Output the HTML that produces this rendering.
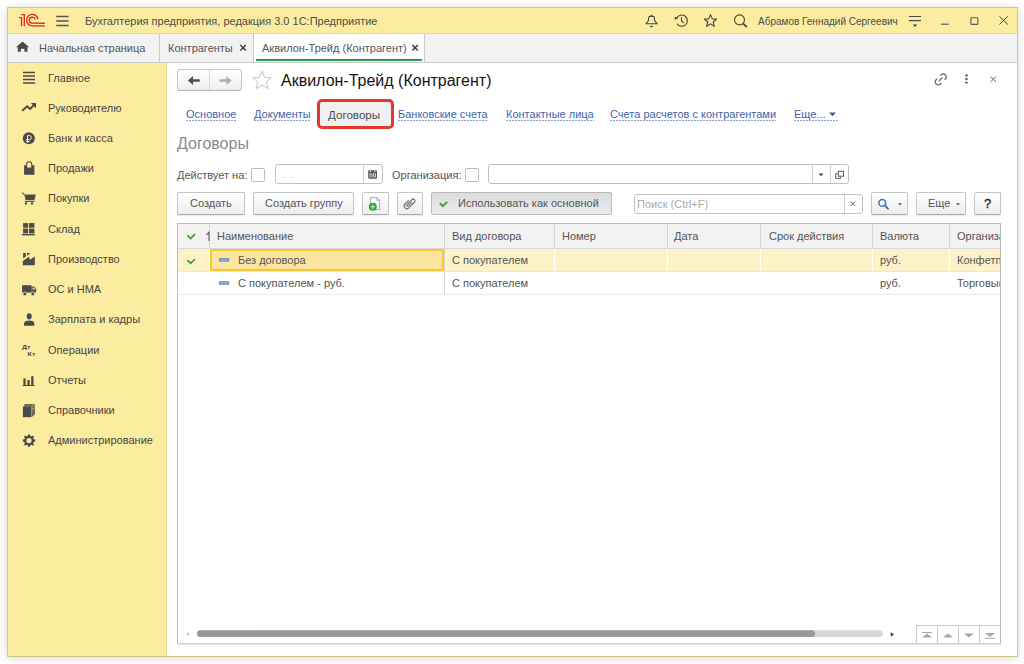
<!DOCTYPE html>
<html><head><meta charset="utf-8">
<style>
*{box-sizing:border-box;margin:0;padding:0}
html,body{width:1024px;height:664px;overflow:hidden;background:#fff;font-family:"Liberation Sans",sans-serif;font-size:11px;color:#555}
.a{position:absolute}
.t{position:absolute;white-space:nowrap;line-height:11px}
svg{position:absolute;overflow:visible;z-index:2}
#win{position:absolute;left:7px;top:7px;width:1011px;height:650px;border:1px solid #d3c68a;background:#fff;box-shadow:0 1px 9px rgba(0,0,0,0.16)}
#title{left:8px;top:8px;width:1009px;height:26px;background:#fbeca0;border-bottom:1px solid #e9d88a}
#tabs{left:8px;top:34px;width:1009px;height:29px;background:#f2f2f2;border-bottom:1px solid #c9c9c9}
#side{left:8px;top:63px;width:159px;height:593px;background:#fbeca0;border-right:1px solid #ecdc94}
.sep{position:absolute;top:34px;width:1px;height:28px;background:#cacaca}
.link{display:inline-block;height:12px;color:#3f62a8;background:repeating-linear-gradient(90deg,#8aa0cf 0 2px,transparent 2px 3px) left bottom/100% 1px no-repeat}
.btn{position:absolute;height:23px;border:1px solid #c4c4c4;border-bottom-color:#a9a9a9;border-radius:2px;background:linear-gradient(#fff,#ededed);box-shadow:0 1px 1px rgba(0,0,0,0.08)}
.fld{position:absolute;border:1px solid #bfbfbf;border-radius:3px;background:#fff}
.chk{position:absolute;width:14px;height:14px;border:1px solid #bdbdbd;border-radius:2px;background:#fff}
.ic{fill:#4a4a4a}
</style></head><body>
<div id="win"></div>
<div id="title" class="a"></div>
<div id="tabs" class="a"></div>
<div id="side" class="a"></div>

<!-- ===== title bar ===== -->
<svg style="left:0;top:0" width="1024" height="34" viewBox="0 0 1024 34">
  <g fill="none" stroke="#dc2a20" stroke-width="1.35">
    <path d="M19 17.6H21.5V26.2M21.2 14.6H24.3V26.2"/>
    <path d="M37.9 19.3A5.7 5.7 0 1 0 32.3 25.8H44.8"/>
    <path d="M35.2 19.4A3 3 0 1 0 32.3 23.2H44.8"/>
  </g>
  <g stroke="#555" stroke-width="1.3"><path d="M56.3 16.5H68.6M56.3 21H68.6M56.3 25.5H68.6"/></g>
  <!-- bell -->
  <path d="M646 23.8H657.1L654.4 20.2V17.8Q654.3 16.4 653 16.4H650Q648.7 16.4 648.6 17.8V20.2Z" fill="none" stroke="#444" stroke-width="1.1" stroke-linejoin="round"/>
  <path d="M650.4 16.2L651.5 14.2L652.6 16.2Z" fill="#444"/>
  <ellipse cx="651.5" cy="26.4" rx="1.7" ry="0.75" fill="#444"/>
  <!-- history -->
  <g fill="none" stroke="#444" stroke-width="1.1">
    <path d="M676.8 18A5.6 5.6 0 1 1 677 23.7"/>
    <path d="M681.5 17.2V20.8L683.7 23"/>
  </g>
  <path d="M674.4 19.6L675.2 16.4L678.2 18.8Z" fill="#444"/>
  <!-- star -->
  <path d="M710.5 14.6L712.3 18.9L716.6 19.1L713.3 22L714.4 26.3L710.5 23.9L706.6 26.3L707.7 22L704.4 19.1L708.7 18.9Z" fill="none" stroke="#444" stroke-width="1.1" stroke-linejoin="round"/>
  <!-- search -->
  <circle cx="739.5" cy="19.9" r="5" fill="none" stroke="#444" stroke-width="1.1"/>
  <path d="M743.2 23.6L746.8 27.2" stroke="#444" stroke-width="1.8"/>
  <!-- filter -->
  <path d="M909 16.4H921M909 20.6H921" stroke="#4a4a4a" stroke-width="1.05"/>
  <path d="M913 24.6H917.2L915.1 26.9Z" fill="#333"/>
  <path d="M941 24.2H948.8" stroke="#6a6a6a" stroke-width="1.3"/>
  <rect x="970.9" y="17.7" width="7" height="6.6" rx="0.8" fill="none" stroke="#5a5a5a" stroke-width="1.15"/>
  <path d="M999.4 16.3L1007.8 24.5M1007.8 16.3L999.4 24.5" stroke="#444" stroke-width="1"/>
</svg>
<div class="t" style="left:85px;top:16px;color:#4d4d4d">Бухгалтерия предприятия, редакция 3.0 1С:Предприятие</div>
<div class="t" style="left:758px;top:16px;font-size:10px;color:#4d4d4d">Абрамов Геннадий Сергеевич</div>

<!-- ===== tabs ===== -->
<div class="sep" style="left:159px"></div>
<div class="sep" style="left:253px"></div>
<div class="a" style="left:254px;top:34px;width:170px;height:28px;background:#fff"></div>
<div class="sep" style="left:424px"></div>
<div class="a" style="left:256px;top:59px;width:166px;height:2px;background:#22a048"></div>
<svg style="left:0;top:0" width="430" height="62" viewBox="0 0 430 62">
  <path d="M22.6 41.6L29.2 47.3H27.4V51.8H24.4V48.8H20.8V51.8H17.8V47.3H16Z" fill="#4a4a4a"/>
  <path d="M240.4 45L245.8 50.4M245.8 45L240.4 50.4" stroke="#3a3a3a" stroke-width="1.45"/>
  <path d="M412.4 45L417.8 50.4M417.8 45L412.4 50.4" stroke="#3a3a3a" stroke-width="1.45"/>
</svg>
<div class="t" style="left:39px;top:43px">Начальная страница</div>
<div class="t" style="left:168px;top:43px">Контрагенты</div>
<div class="t" style="left:262px;top:43px">Аквилон-Трейд (Контрагент)</div>

<!-- ===== sidebar ===== -->
<svg style="left:0;top:0" width="170" height="460" viewBox="0 0 170 460">
  <g class="ic">
    <!-- main -->
    <path d="M23 72.5H35M23 76H35M23 79.5H35M23 83H35" stroke="#4a4a4a" stroke-width="1.5"/>
    <!-- trend -->
    <path d="M22.2 110.8L27.2 106.2L30 109L34 105" fill="none" stroke="#4a4a4a" stroke-width="1.9"/>
    <path d="M30.8 103H36V108.2Z"/>
    <!-- ruble -->
    <circle cx="28.8" cy="138.3" r="6"/>
    <path d="M27.5 143V135.6H29.4A2 2 0 0 1 29.4 139.6H25.9M25.9 141.4H29.8" fill="none" stroke="#fbeca0" stroke-width="1"/>
    <!-- bag -->
    <path d="M24.1 165.2H26.1V164.4A3.1 3.1 0 0 1 32.3 164.4V165.2H34.4V174.8H24.1Z"/>
    <path d="M27.1 167.6V164.4A2.1 2.1 0 0 1 31.3 164.4V167.6Z" fill="#fbeca0"/>
    <!-- cart -->
    <path d="M22.3 192.6L24.4 194.6" stroke="#4a4a4a" stroke-width="1.2"/>
    <path d="M24.3 194.6H35.8L34.4 200.2H25.6Z"/>
    <path d="M25 201.5H34.6" stroke="#4a4a4a" stroke-width="0.9"/>
    <circle cx="26" cy="203.4" r="1.2"/><circle cx="32" cy="203.4" r="1.2"/>
    <!-- warehouse -->
    <rect x="23.1" y="223.1" width="5" height="4.6"/><rect x="29" y="223.1" width="5.4" height="4.6"/>
    <rect x="23.1" y="228.6" width="5" height="4.8"/><rect x="29" y="228.6" width="5.4" height="4.8"/>
    <rect x="22" y="234" width="12.8" height="1.4"/>
    <!-- factory -->
    <path d="M23.2 253H25.8V256.6L23.2 258.4Z M27.1 253H29.7V254L27.1 255.8Z"/>
    <path d="M22.8 265.2V261L28.8 256.8L30 259.8L34.8 256.6V265.2Z"/>
    <!-- truck -->
    <rect x="22.1" y="285.2" width="9.4" height="7.4"/>
    <path d="M31.4 286.6H34.2L36.1 289.2V292.6H31.4Z"/>
    <path d="M32.6 287.6H33.8L35.1 289.4H32.6Z" fill="#fbeca0"/>
    <circle cx="24.8" cy="293.9" r="1.9" stroke="#fbeca0" stroke-width="0.8"/><circle cx="32.8" cy="293.9" r="1.9" stroke="#fbeca0" stroke-width="0.8"/>
    <!-- person -->
    <ellipse cx="29.2" cy="316.3" rx="2.5" ry="3.1"/>
    <path d="M24 325.8V323.6C24 321.6 26.2 320.6 29.2 320.6C32.2 320.6 34.3 321.6 34.3 323.6V325.8Z"/>
    <!-- Dt Kt -->
    <text transform="translate(22 348.8) scale(1.1 0.8)" font-family="Liberation Sans" font-size="6.4" font-weight="bold" fill="#4a4a4a">Дт</text>
    <text transform="translate(27.6 355.8) scale(1.1 0.8)" font-family="Liberation Sans" font-size="6.4" font-weight="bold" fill="#4a4a4a">Кт</text>
    <!-- chart -->
    <rect x="23.4" y="378.4" width="2.2" height="6.8"/><rect x="27.4" y="380" width="2.3" height="5.2"/><rect x="31.2" y="376.2" width="2.3" height="9"/>
    <rect x="22.7" y="385" width="11.9" height="1"/>
    <!-- book -->
    <path d="M25 404H35V414.6L31.4 417.2V407.2H22.9Z" fill="#6c6a55"/>
    <rect x="22.9" y="407" width="8.2" height="10.2"/>
    <path d="M31.6 406.8L34.6 404.4M31.6 410L34.6 407.6" stroke="#fbeca0" stroke-width="0.6"/>
    <!-- gear -->
    <g transform="translate(29 440.6)">
      <path d="M-1 -6.2H1L1.3 -4.6L2.6 -4.1L3.9 -5.1L5.1 -3.9L4.1 -2.6L4.6 -1.3L6.2 -1V1L4.6 1.3L4.1 2.6L5.1 3.9L3.9 5.1L2.6 4.1L1.3 4.6L1 6.2H-1L-1.3 4.6L-2.6 4.1L-3.9 5.1L-5.1 3.9L-4.1 2.6L-4.6 1.3L-6.2 1V-1L-4.6 -1.3L-4.1 -2.6L-5.1 -3.9L-3.9 -5.1L-2.6 -4.1L-1.3 -4.6Z"/>
      <circle r="2.6" fill="#fbeca0"/>
    </g>
  </g>
</svg>
<div class="t" style="left:48px;top:73px;color:#464646">Главное</div>
<div class="t" style="left:48px;top:103px;color:#464646">Руководителю</div>
<div class="t" style="left:48px;top:133px;color:#464646">Банк и касса</div>
<div class="t" style="left:48px;top:163px;color:#464646">Продажи</div>
<div class="t" style="left:48px;top:193px;color:#464646">Покупки</div>
<div class="t" style="left:48px;top:224px;color:#464646">Склад</div>
<div class="t" style="left:48px;top:254px;color:#464646">Производство</div>
<div class="t" style="left:48px;top:284px;color:#464646">ОС и НМА</div>
<div class="t" style="left:48px;top:314px;color:#464646">Зарплата и кадры</div>
<div class="t" style="left:48px;top:345px;color:#464646">Операции</div>
<div class="t" style="left:48px;top:375px;color:#464646">Отчеты</div>
<div class="t" style="left:48px;top:405px;color:#464646">Справочники</div>
<div class="t" style="left:48px;top:435px;color:#464646">Администрирование</div>

<!-- ===== content header ===== -->
<div class="a" style="left:177px;top:69px;width:65px;height:22px;border:1px solid #c6c6c6;border-bottom-color:#b0b0b0;border-radius:3px;background:linear-gradient(#fff,#efefef)"></div>
<div class="a" style="left:209px;top:70px;width:1px;height:20px;background:#d8d8d8"></div>
<svg style="left:0;top:0" width="1010" height="96" viewBox="0 0 1010 96">
  <path d="M187.8 80.5L193 75.9V79.3H199.8V81.7H193V85.1Z" fill="#505050"/>
  <path d="M231.6 80.5L226.4 75.9V79.3H219.4V81.7H226.4V85.1Z" fill="#ababab"/>
  <path d="M262 71.2L264.6 77.4L271.3 77.8L266.2 82L267.9 88.6L262 85L256.1 88.6L257.8 82L252.7 77.8L259.4 77.4Z" fill="none" stroke="#bcc4cc" stroke-width="1"/>
  <!-- link icon -->
  <g fill="none" stroke="#666" stroke-width="1.25" transform="translate(940.8 79.8) rotate(-45)">
    <path d="M-1.9 -3.4H-3.3A3 3 0 0 0 -3.3 2.6H-1.9"/>
    <path d="M2.6 -3.4H3.8A3 3 0 0 1 3.8 2.6H2.6"/>
    <path d="M-2.3 -0.4H2.8"/>
  </g>
  <circle cx="966.5" cy="75.4" r="1.2" fill="#555"/><circle cx="966.5" cy="79" r="1.2" fill="#555"/><circle cx="966.5" cy="82.6" r="1.2" fill="#555"/>
  <path d="M990.4 76.6L996.2 82M996.2 76.6L990.4 82" stroke="#666" stroke-width="1"/>
</svg>
<div class="t" style="left:281px;top:73px;font-size:16px;line-height:16px;color:#141414">Аквилон-Трейд (Контрагент)</div>

<div class="t" style="left:186px;top:109px"><span class="link">Основное</span></div>
<div class="t" style="left:254px;top:109px"><span class="link">Документы</span></div>
<div class="t" style="left:398px;top:109px"><span class="link">Банковские счета</span></div>
<div class="t" style="left:506px;top:109px"><span class="link">Контактные лица</span></div>
<div class="t" style="left:610px;top:109px"><span class="link">Счета расчетов с контрагентами</span></div>
<div class="t" style="left:794px;top:109px"><span class="link" style="width:44px">Еще...</span></div>
<svg style="left:0;top:0" width="850" height="130" viewBox="0 0 850 130"><path d="M829 112.4H836L832.5 116.2Z" fill="#3f62a8"/></svg>

<div class="a" style="left:317px;top:99px;width:77px;height:30px;border:3px solid #e0392e;border-radius:5px;background:#f0f0f0"></div>
<div class="t" style="left:328px;top:109px;color:#4d4d4d;font-size:11.6px">Договоры</div>

<div class="t" style="left:177px;top:136px;font-size:16px;line-height:16px;color:#8a8a8a">Договоры</div>

<div class="t" style="left:177px;top:170px">Действует на:</div>
<div class="chk" style="left:251px;top:168px"></div>
<div class="fld" style="left:275px;top:164px;width:108px;height:20px"></div>
<div class="a" style="left:363px;top:165px;width:1px;height:18px;background:#cfcfcf"></div>
<div class="a" style="left:284px;top:177px;width:1px;height:1px;background:#aaa"></div><div class="a" style="left:292px;top:177px;width:1px;height:1px;background:#aaa"></div>
<svg style="left:0;top:0" width="860" height="190" viewBox="0 0 860 190">
  <path d="M368.2 171.4Q368.2 170.2 369.4 170.2H375.8Q377 170.2 377 171.4V177.6Q377 178.8 375.8 178.8H369.4Q368.2 178.8 368.2 177.6Z" fill="#555"/>
  <path d="M370 173.2V177.4M371.9 173.2V177.4M373.7 173.2V177.4M375.4 173.2V177.4" stroke="#fff" stroke-width="0.8"/>
  <circle cx="370.4" cy="171.2" r="0.7" fill="#fff"/><circle cx="374.8" cy="171.2" r="0.7" fill="#fff"/>
  <path d="M818.6 173.6H823.4L821 176.2Z" fill="#444"/>
  <g fill="none" stroke="#555" stroke-width="1">
    <rect x="838.3" y="171.3" width="5.2" height="4.9"/>
    <path d="M837.4 173.6H835.7V178.3H840.6V177"/>
  </g>
</svg>
<div class="t" style="left:392px;top:170px">Организация:</div>
<div class="chk" style="left:465px;top:168px"></div>
<div class="fld" style="left:488px;top:164px;width:361px;height:20px"></div>
<div class="a" style="left:812px;top:165px;width:1px;height:18px;background:#cfcfcf"></div>
<div class="a" style="left:830px;top:165px;width:1px;height:18px;background:#cfcfcf"></div>

<!-- ===== toolbar ===== -->
<div class="btn" style="left:177px;top:192px;width:68px"></div>
<div class="t" style="left:190px;top:198px">Создать</div>
<div class="btn" style="left:253px;top:192px;width:101px"></div>
<div class="t" style="left:265px;top:198px">Создать группу</div>
<div class="btn" style="left:362px;top:192px;width:27px"></div>
<div class="btn" style="left:397px;top:192px;width:26px"></div>
<div class="a" style="left:431px;top:192px;width:181px;height:23px;border:1px solid #b9b9b9;border-radius:2px;background:linear-gradient(#dcdcdc,#ececec)"></div>
<div class="t" style="left:458px;top:198px">Использовать как основной</div>
<div class="fld" style="left:634px;top:194px;width:229px;height:20px"></div>
<div class="a" style="left:844px;top:195px;width:1px;height:18px;background:#cfcfcf"></div>
<div class="t" style="left:637px;top:199px;color:#aaa">Поиск (Ctrl+F)</div>
<div class="btn" style="left:871px;top:192px;width:37px"></div>
<div class="btn" style="left:916px;top:192px;width:50px"></div>
<div class="t" style="left:928px;top:198px">Еще</div>
<div class="btn" style="left:974px;top:192px;width:27px"></div>
<div class="t" style="left:984px;top:197px;font-size:13px;line-height:13px;font-weight:normal;color:#1e1e1e;-webkit-text-stroke:0.3px #1e1e1e">?</div>
<svg style="left:0;top:0" width="1010" height="220" viewBox="0 0 1010 220">
  <!-- doc add -->
  <path d="M370.6 197.6H377L379.6 200.2V209.4H370.6Z" fill="#fff" stroke="#9aa2aa" stroke-width="0.9"/>
  <path d="M377 197.8V200.4H379.4" fill="none" stroke="#9aa2aa" stroke-width="0.9"/>
  <circle cx="372.8" cy="206.7" r="4" fill="#2fa530"/>
  <path d="M372.8 204.2V209.2M370.4 206.7H375.2" stroke="#c8ecc8" stroke-width="1.1"/>
  <!-- paperclip -->
  <path transform="translate(409.8 203) rotate(45) scale(0.9)" d="M1 -2.5V3.5A1 1 0 0 1 -1 3.5V-4.2A2 2 0 0 1 3 -4.2V4.6A3 3 0 0 1 -3 4.6V-1.5" fill="none" stroke="#7a7a7a" stroke-width="1.45"/>
  <path d="M439.8 203.2L442.8 206.2L447.2 201.8" fill="none" stroke="#3a9a2a" stroke-width="1.8"/>
  <path d="M850.6 201.4L855.2 206M855.2 201.4L850.6 206" stroke="#666" stroke-width="1"/>
  <circle cx="882.3" cy="202.9" r="3.4" fill="none" stroke="#3577bb" stroke-width="1.5"/>
  <path d="M884.8 205.4L888 208.6" stroke="#3577bb" stroke-width="2" stroke-linecap="round"/>
  <path d="M898 203.2H902L900 205.4Z" fill="#555"/>
  <path d="M956 203.2H960L958 205.4Z" fill="#555"/>
</svg>

<!-- ===== table ===== -->
<div class="a" style="left:177px;top:644px;width:824px;height:1px;background:#e4e4e4"></div>
<div class="a" style="left:177px;top:223px;width:824px;height:421px;border:1px solid #bcbcbc;border-bottom-color:#d2d2d2;background:#fff;overflow:hidden">
  <div class="a" style="left:0;top:0;width:822px;height:25px;background:#f2f2f2;border-bottom:1px solid #dadada"></div>
  <div class="a" style="left:0;top:25px;width:822px;height:23px;background:#fdf1c8;border-bottom:1px solid #e8e8e8"></div>
  <div class="a" style="left:0;top:48px;width:822px;height:23px;background:#fff;border-bottom:1px solid #e8e8e8"></div>
  <!-- header col lines -->
  <div class="a" style="left:31px;top:0;width:1px;height:24px;background:#d6d6d6"></div>
  <div class="a" style="left:266px;top:0;width:1px;height:70px;background:#d6d6d6"></div><div class="a" style="left:31px;top:25px;width:1px;height:22px;background:#fff"></div>
  <div class="a" style="left:376px;top:0;width:1px;height:24px;background:#d6d6d6"></div>
  <div class="a" style="left:489px;top:0;width:1px;height:24px;background:#d6d6d6"></div>
  <div class="a" style="left:582px;top:0;width:1px;height:24px;background:#d6d6d6"></div>
  <div class="a" style="left:694px;top:0;width:1px;height:24px;background:#d6d6d6"></div>
  <div class="a" style="left:771px;top:0;width:1px;height:24px;background:#d6d6d6"></div>
  <!-- row1 white lines -->
  <div class="a" style="left:376px;top:25px;width:1px;height:22px;background:#fff"></div>
  <div class="a" style="left:489px;top:25px;width:1px;height:22px;background:#fff"></div>
  <div class="a" style="left:582px;top:25px;width:1px;height:22px;background:#fff"></div>
  <div class="a" style="left:694px;top:25px;width:1px;height:22px;background:#fff"></div>
  <div class="a" style="left:771px;top:25px;width:1px;height:22px;background:#fff"></div>
  <div class="a" style="left:32px;top:25px;width:234px;height:22px;border:2px solid #f8c92c;background:#fce5a0"></div>

  <div class="t" style="left:39px;top:7px">Наименование</div>
  <div class="t" style="left:274px;top:7px">Вид договора</div>
  <div class="t" style="left:384px;top:7px">Номер</div>
  <div class="t" style="left:496px;top:7px">Дата</div>
  <div class="t" style="left:591px;top:7px">Срок действия</div>
  <div class="t" style="left:702px;top:7px">Валюта</div>
  <div class="t" style="left:779px;top:7px">Организация</div>

  <div class="t" style="left:60px;top:31px">Без договора</div>
  <div class="t" style="left:274px;top:31px">С покупателем</div>
  <div class="t" style="left:702px;top:31px">руб.</div>
  <div class="t" style="left:779px;top:31px">Конфетпром</div>
  <div class="t" style="left:60px;top:54px">С покупателем - руб.</div>
  <div class="t" style="left:274px;top:54px">С покупателем</div>
  <div class="t" style="left:702px;top:54px">руб.</div>
  <div class="t" style="left:779px;top:54px">Торговый дом</div>

  <svg style="left:0;top:0" width="822" height="419" viewBox="178 224 822 419">
    <path d="M187.4 235.4L190.6 238.6L195 234.2" fill="none" stroke="#3c9c2c" stroke-width="1.7"/>
    <path d="M187.4 260.2L190.6 263.4L195 259" fill="none" stroke="#3c9c2c" stroke-width="1.7"/>
    <path d="M206.4 235L209 232.2V241" fill="none" stroke="#555" stroke-width="1.1"/>
    <rect x="219.6" y="258.7" width="9.2" height="2.4" fill="#8cb6de" stroke="#4f7cab" stroke-width="0.8"/>
    <rect x="219.6" y="281.8" width="9.2" height="2.4" fill="#8cb6de" stroke="#4f7cab" stroke-width="0.8"/>
    <!-- scrollbar -->
    <path d="M188.8 632.4V635.8L186 634.1Z" fill="#b0b0b0"/>
    <rect x="197" y="630.2" width="686" height="6.8" rx="3.4" fill="#d6d6d6"/>
    <rect x="197" y="630.2" width="618" height="6.8" rx="3.4" fill="#999"/>
    <path d="M890.8 632.2V636.6L894 634.4Z" fill="#333"/>
  </svg>
  <!-- nav buttons -->
  <div class="a" style="left:738px;top:401px;width:85px;height:19px;border:1px solid #c8c8c8;border-right:none;border-bottom:none;background:#fff"></div>
  <div class="a" style="left:759px;top:402px;width:1px;height:18px;background:#c8c8c8"></div>
  <div class="a" style="left:780px;top:402px;width:1px;height:18px;background:#c8c8c8"></div>
  <div class="a" style="left:801px;top:402px;width:1px;height:18px;background:#c8c8c8"></div>
  <svg style="left:0;top:0" width="822" height="419" viewBox="178 224 822 419">
    <g fill="#a8a8a8">
      <path d="M922 637.6H932L927 633.6Z"/><rect x="922" y="632" width="10" height="1"/>
      <path d="M943 637.6H953L948 633.6Z"/>
      <path d="M964 633.6H974L969 637.6Z"/>
      <path d="M985 633H995L990 637Z"/><rect x="985" y="637.8" width="10" height="1"/>
    </g>
  </svg>
</div>
</body></html>
